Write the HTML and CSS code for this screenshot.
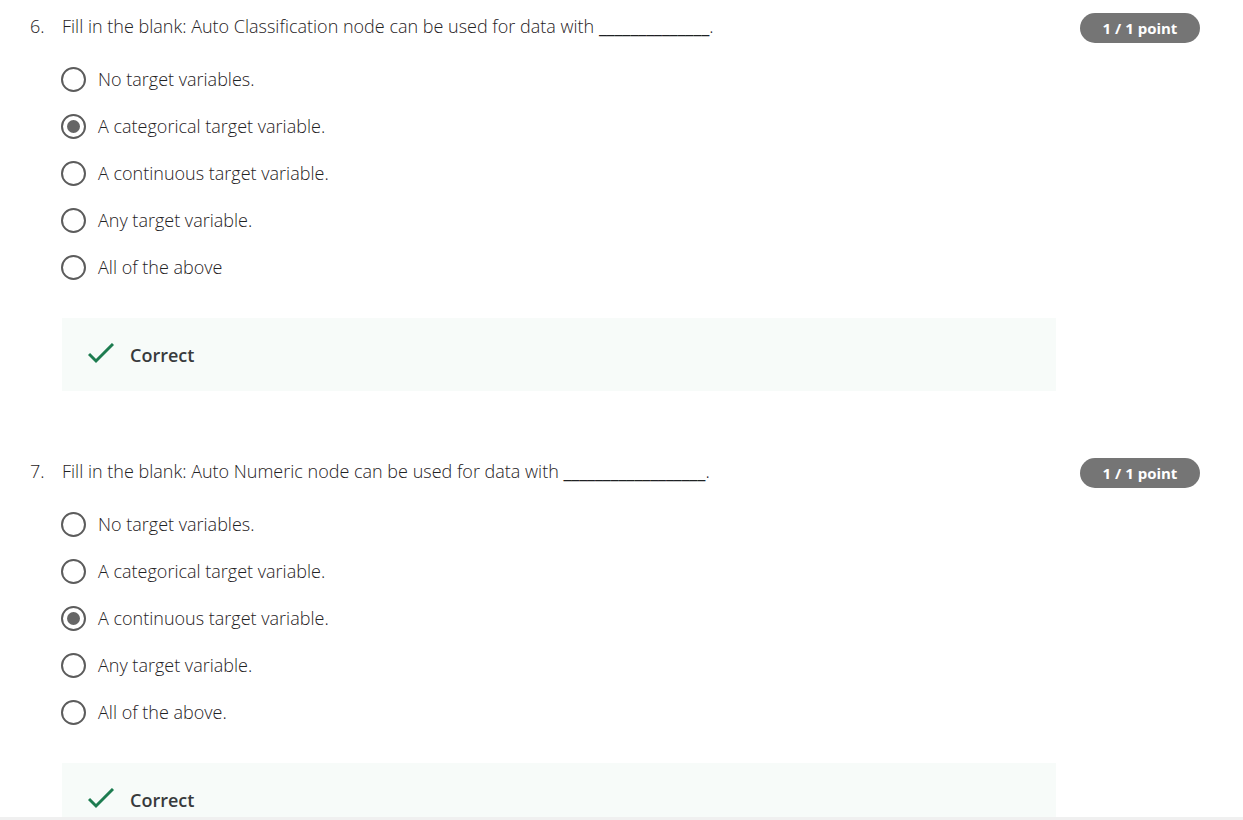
FILE: index.html
```
<!DOCTYPE html>
<html lang="en">
<head>
<meta charset="utf-8">
<title>Quiz results</title>
<link rel="stylesheet" href="styles.css">
</head>
<body>
<main class="quiz">
<section class="question">
<span class="number">6.</span>
<fieldset class="body">
<legend class="prompt">Fill in the blank: Auto Classification node can be used for data with <span class="blank">______________</span>.</legend>
<div class="options">
<label class="option"><input type="radio" name="q6">No target variables.</label>
<label class="option"><input type="radio" name="q6" checked>A categorical target variable.</label>
<label class="option"><input type="radio" name="q6">A continuous target variable.</label>
<label class="option"><input type="radio" name="q6">Any target variable.</label>
<label class="option"><input type="radio" name="q6">All of the above</label>
</div>
<div class="feedback"><svg class="check" viewBox="0 0 26 24" aria-hidden="true"><path d="M1 11l7 7L25 1"/></svg>Correct</div>
</fieldset>
<span class="points">1 / 1 point</span>
</section>
<section class="question">
<span class="number">7.</span>
<fieldset class="body">
<legend class="prompt">Fill in the blank: Auto Numeric node can be used for data with <span class="blank">__________________</span>.</legend>
<div class="options">
<label class="option"><input type="radio" name="q7">No target variables.</label>
<label class="option"><input type="radio" name="q7">A categorical target variable.</label>
<label class="option"><input type="radio" name="q7" checked>A continuous target variable.</label>
<label class="option"><input type="radio" name="q7">Any target variable.</label>
<label class="option"><input type="radio" name="q7">All of the above.</label>
</div>
<div class="feedback"><svg class="check" viewBox="0 0 26 24" aria-hidden="true"><path d="M1 11l7 7L25 1"/></svg>Correct</div>
</fieldset>
<span class="points">1 / 1 point</span>
</section>
</main>
</body>
</html>
```
FILE: styles.css
```
* { box-sizing: border-box; }
html { height: 100%; }
body {
  margin: 0;
  height: 100vh;
  overflow: hidden;
  background: #fff;
  color: #1f2224;
  font: 300 18px/26px "Open Sans", sans-serif;
}
.quiz {
  height: 100%;
  overflow: hidden;
  padding: 13px 43px 0 30px;
  border-bottom: 3px solid #f0f0f0;
}
.question {
  display: grid;
  grid-template-columns: 32px 1fr 120px;
  align-items: start;
  margin-bottom: 67px;
}
.body {
  min-width: 0;
  margin: 0 24px 0 0;
  padding: 0;
  border: 0;
}
.prompt { padding: 0; }
.blank { font-weight: 400; }
.options {
  display: grid;
  gap: 21px;
  margin-left: -1px;
  padding: 27px 0 38px;
}
.option {
  display: flex;
  align-items: center;
  gap: 12px;
}
.option input {
  display: grid;
  place-items: center;
  appearance: none;
  width: 25px;
  height: 25px;
  margin: 0;
  border: 2px solid #5c5c5c;
  border-radius: 50%;
}
.option input:checked::before {
  content: "";
  width: 13px;
  height: 13px;
  border-radius: 50%;
  background: #666;
}
.feedback {
  display: flex;
  align-items: center;
  gap: 16px;
  height: 73px;
  padding-left: 26px;
  background: #f7fbf9;
  color: #373a3c;
  font-weight: 600;
}
.check {
  width: 26px;
  height: 24px;
  fill: none;
  stroke: #1d7c50;
  stroke-width: 3;
}
.points {
  height: 30px;
  border-radius: 15px;
  background: #757575;
  color: #fff;
  font-size: 15px;
  font-weight: 700;
  line-height: 30px;
  text-align: center;
}
```
